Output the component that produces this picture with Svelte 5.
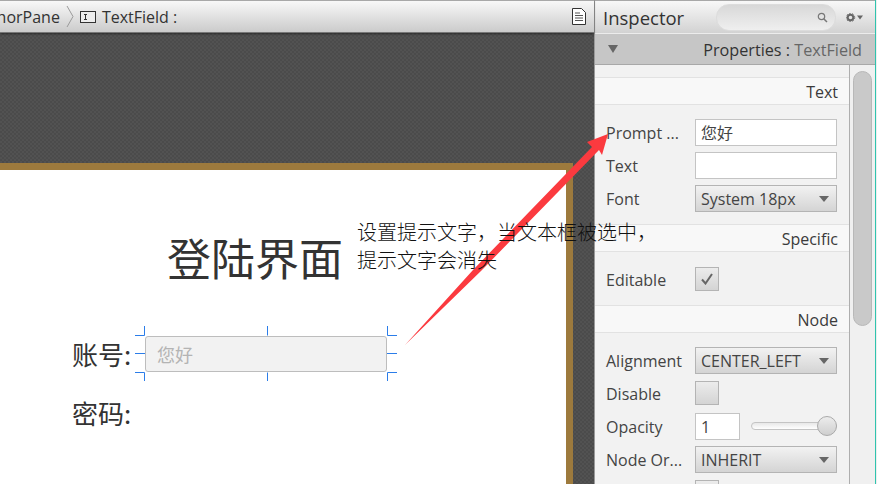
<script>
  const groups = [
    { title: 'Text', cls: '', rows: [
      { label: 'Prompt ...', kind: 'input', value: '您好' },
      { label: 'Text', kind: 'input', value: '' },
      { label: 'Font', kind: 'select', value: 'System 18px' }
    ]},
    { title: 'Specific', cls: 'spec', rows: [
      { label: 'Editable', kind: 'check', checked: true }
    ]},
    { title: 'Node', cls: '', rows: [
      { label: 'Alignment', kind: 'select', value: 'CENTER_LEFT' },
      { label: 'Disable', kind: 'check', checked: false },
      { label: 'Opacity', kind: 'slider', value: '1' },
      { label: 'Node Or...', kind: 'select', value: 'INHERIT' },
      { label: '', kind: 'check', checked: false }
    ]}
  ];
</script>

<div class="root">
  <section class="editor">
    <header class="crumbs">
      <div class="trail">
        <span class="crumb">AnchorPane</span>
        <svg class="chev" width="8" height="21" viewBox="0 0 8 21"><path d="M1 0 L7 10.500 L1 21" fill="none" stroke="#9a9a9a" stroke-width="1"/></svg>
        <svg class="tf" width="16" height="12" viewBox="0 0 16 12"><rect x=".5" y=".5" width="15" height="11" fill="#eee" stroke="#333"/><path d="M4 3.500h3M4 8.500h3M5.500 3.500v5" stroke="#333" fill="none"/></svg>
        <span class="crumb">TextField :</span>
      </div>
      <svg class="doc" width="14" height="17" viewBox="0 0 14 17"><path d="M.5 .5h9l4 4v12H.5z" fill="#fff" stroke="#333"/><path d="M3 5h5M3 7.500h8M3 10h8M3 12.500h8" stroke="#555"/></svg>
    </header>
    <div class="canvas">
      <div class="scene">
        <h1>登陆界面</h1>
        <div class="line">
          <span class="lab">账号:</span>
          <div class="field">您好
            <svg class="handles" width="262" height="55" viewBox="0 0 262 55">
              <path d="M0 9.500H9.500V0M132.500 0V9.500M252.500 0V9.500H262M0 27.500H10M252 27.500H262M0 46.500H9.500V55M132.500 46.500V55M262 46.500H252.500V55" fill="none" stroke="#2b7de9"/>
            </svg>
          </div>
        </div>
        <div class="line second"><span class="lab">密码:</span></div>
      </div>
    </div>
  </section>

  <aside class="inspector">
    <header class="ihead">
      <span class="ititle">Inspector</span>
      <div class="search">
        <svg width="11" height="11" viewBox="0 0 11 11"><circle cx="4.500" cy="4.500" r="3.200" fill="none" stroke="#777" stroke-width="1.200"/><path d="M7 7l3 3" stroke="#777" stroke-width="1.500"/></svg>
      </div>
      <div class="gear">
        <svg width="17" height="9" viewBox="0 0 17 9"><circle cx="4.500" cy="4.500" r="2.800" fill="none" stroke="#666" stroke-width="2"/><circle cx="4.500" cy="4.500" r="4.200" fill="none" stroke="#666" stroke-width="1" stroke-dasharray="1.500 1.500"/><path d="M11 2.500h6l-3 4z" fill="#666"/></svg>
      </div>
    </header>
    <div class="props">
      <span class="tri"></span>
      <span class="ptext">Properties : <em>TextField</em></span>
    </div>
    <div class="body">
      <div class="list">
        {#each groups as g}
          <div class="band">{g.title}</div>
          <div class="rows {g.cls}">
            {#each g.rows as r}
              <div class="row {r.kind}-row">
                <span class="rlabel">{r.label}</span>
                {#if r.kind === 'input'}
                  <div class="input">{r.value}</div>
                {:else if r.kind === 'select'}
                  <div class="select"><span>{r.value}</span><i></i></div>
                {:else if r.kind === 'check'}
                  <div class="check">
                    {#if r.checked}
                      <svg width="14" height="12" viewBox="0 0 14 12"><path d="M2 6.500 L5.500 10.500 L12 1" fill="none" stroke="#666" stroke-width="2"/></svg>
                    {/if}
                  </div>
                {:else}
                  <div class="input short">{r.value}</div>
                  <div class="slider"><span class="thumb"></span></div>
                {/if}
              </div>
            {/each}
          </div>
        {/each}
      </div>
      <div class="scroll"><div class="sthumb"></div></div>
    </div>
  </aside>
  <div class="edge"></div>

  <svg class="arrow" width="877" height="484" viewBox="0 0 877 484">
    <polygon points="405,345 473,270 592,147 587,142 608,134 602,155 599,150 482,270" fill="#fb3a3f"/>
  </svg>
  <div class="note">设置提示文字，当文本框被选中，<br />提示文字会消失</div>
</div>

<style>
  :global(body) { margin: 0; }
  .root {
    position: relative;
    width: 877px;
    height: 484px;
    display: flex;
    overflow: hidden;
    font-family: "Open Sans", "Noto Sans CJK SC", sans-serif;
    color: #3b3b3b;
    background: #fff;
  }
  .editor { width: 594px; flex: none; display: flex; flex-direction: column; }
  .crumbs {
    position: relative;
    height: 33px;
    box-sizing: border-box;
    border-top: 1px solid #a8a8a8;
    border-bottom: 1px solid #777;
    box-shadow: 0 1px 2px rgba(0, 0, 0, 0.45);
    background: linear-gradient(#f8f8f8, #cbcbcb);
    display: flex;
    align-items: center;
    justify-content: space-between;
    padding-right: 8px;
    flex: none;
  }
  .trail { display: flex; align-items: center; min-width: 0; margin-left: -31px; }
  .crumb { font-size: 16px; white-space: nowrap; color: #333; }
  .chev { margin: 0 6px; }
  .tf { margin-right: 6px; }
  .canvas {
    flex: 1;
    min-height: 0;
    padding: 130px 21px 0 0;
    background: repeating-conic-gradient(#4b4b4b 0 25%, #525252 0 50%) 0 0 / 4px 4px;
  }
  .scene {
    height: 100%;
    box-sizing: border-box;
    background: #fff;
    border-top: 7px solid #9d7a3d;
    border-right: 7px solid #9d7a3d;
    padding: 53px 0 0 72px;
  }
  h1 {
    margin: 0 0 45px 95px;
    font: 400 44px/68px "Noto Sans CJK SC", sans-serif;
    color: #333;
  }
  .line { display: flex; align-items: center; height: 36px; }
  .line.second { margin-top: 23px; }
  .lab { width: 73px; flex: none; font: 400 26px/36px "Noto Sans CJK SC", sans-serif; color: #333; }
  .field {
    position: relative;
    width: 242px;
    height: 36px;
    box-sizing: border-box;
    border: 1px solid #bdbdbd;
    border-radius: 3px;
    background: #f2f2f2;
    padding-left: 11px;
    font: 400 18px/34px "Noto Sans CJK SC", sans-serif;
    color: #b4b4b4;
  }
  .handles { position: absolute; left: -11px; top: -11px; }

  .inspector {
    flex: 1;
    min-width: 0;
    display: flex;
    flex-direction: column;
    border-left: 1px solid #9a9a9a;
    background: #f2f2f2;
  }
  .edge {
    width: 2px;
    flex: none;
    box-sizing: border-box;
    border-left: 1px solid #2fc4ae;
    background: #eee;
  }
  .ihead {
    height: 33px;
    box-sizing: border-box;
    flex: none;
    border-top: 1px solid #a8a8a8;
    background: linear-gradient(#f8f8f8, #d2d2d2);
    display: flex;
    align-items: center;
    padding: 0 12px 0 8px;
  }
  .ititle { font-size: 18.500px; color: #333; width: 113px; flex: none; }
  .search {
    width: 120px;
    height: 27px;
    box-sizing: border-box;
    border: 1px solid #dcdcdc;
    border-radius: 13px;
    background: linear-gradient(#d8d8d8, #efefef);
    display: flex;
    align-items: center;
    justify-content: flex-end;
    padding-right: 7px;
  }
  .gear { margin-left: auto; display: flex; }
  .props {
    height: 32px;
    box-sizing: border-box;
    flex: none;
    background: #c6c6c6;
    border-top: 1px solid #ececec;
    border-bottom: 1px solid #a8a8a8;
    display: flex;
    align-items: center;
    justify-content: space-between;
    padding: 0 13px 0 13px;
  }
  .tri {
    width: 0; height: 0;
    border-left: 5.500px solid transparent;
    border-right: 5.500px solid transparent;
    border-top: 8px solid #666;
  }
  .ptext { font-size: 16.200px; color: #333; padding-top: 2px; }
  .ptext em { font-style: normal; color: #666; }
  .body { flex: 1; min-height: 0; display: flex; }
  .list { width: 254px; flex: none; padding-top: 12px; overflow: hidden; box-sizing: border-box; }
  .band {
    height: 28px;
    box-sizing: border-box;
    border-top: 1px solid #e2e2e2;
    border-bottom: 1px solid #e2e2e2;
    background: #f8f8f8;
    font-size: 16px;
    line-height: 28px;
    text-align: right;
    padding-right: 11px;
  }
  .rows { padding: 14px 12px 12px 11px; display: flex; flex-direction: column; gap: 6px; }
  .rows.spec { padding-bottom: 13px; }
  .row { display: flex; align-items: center; min-height: 27px; }
  .row.check-row { min-height: 26px; }
  .row.slider-row { min-height: 28px; }
  .check-row .rlabel, .slider-row .rlabel { padding-top: 2px; }
  .rlabel { width: 89px; flex: none; font-size: 16px; white-space: nowrap; color: #444; }
  .input {
    width: 142px;
    height: 27px;
    box-sizing: border-box;
    border: 1px solid #c4c4c4;
    background: #fff;
    font-size: 16px;
    line-height: 26px;
    padding-left: 5px;
    color: #444;
  }
  .input.short { width: 45px; }
  .select {
    width: 142px;
    height: 27px;
    box-sizing: border-box;
    border: 1px solid #b4b4b4;
    background: linear-gradient(#f2f2f2, #d4d4d4);
    font-size: 16px;
    line-height: 26px;
    padding: 1px 6px 0 5px;
    color: #444;
    display: flex;
    align-items: center;
    justify-content: space-between;
  }
  .select i {
    width: 0; height: 0;
    border-left: 5px solid transparent;
    border-right: 5px solid transparent;
    border-top: 6px solid #666;
    margin-right: 1px;
  }
  .check {
    width: 24px;
    height: 24px;
    box-sizing: border-box;
    border: 1px solid #b4b4b4;
    background: linear-gradient(#ececec, #d4d4d4);
    display: flex;
    align-items: center;
    justify-content: center;
  }
  .slider {
    position: relative;
    width: 86px;
    height: 8px;
    margin-left: 11px;
    box-sizing: border-box;
    border: 1px solid #c4c4c4;
    border-radius: 4px;
    background: linear-gradient(#e8e8e8, #fff);
  }
  .thumb {
    position: absolute;
    right: -1px;
    top: -7px;
    width: 20px;
    height: 20px;
    box-sizing: border-box;
    border-radius: 50%;
    border: 1px solid #aaa;
    background: linear-gradient(#ececec, #cfcfcf);
  }
  .scroll {
    flex: 1;
    border-left: 1px solid #aeaeae;
    padding: 6px 3px 0 3px;
    background: #f0f0f0;
  }
  .sthumb {
    height: 255px;
    background: #c9c9c9;
    border: 1px solid #b8b8b8;
    border-radius: 10px;
    box-sizing: border-box;
  }
  .note {
    position: absolute;
    left: 357px;
    top: 218px;
    font: 300 20px/28px "Noto Sans CJK SC", sans-serif;
    color: #111;
    white-space: nowrap;
  }
  .arrow { position: absolute; left: 0; top: 0; pointer-events: none; }
</style>
